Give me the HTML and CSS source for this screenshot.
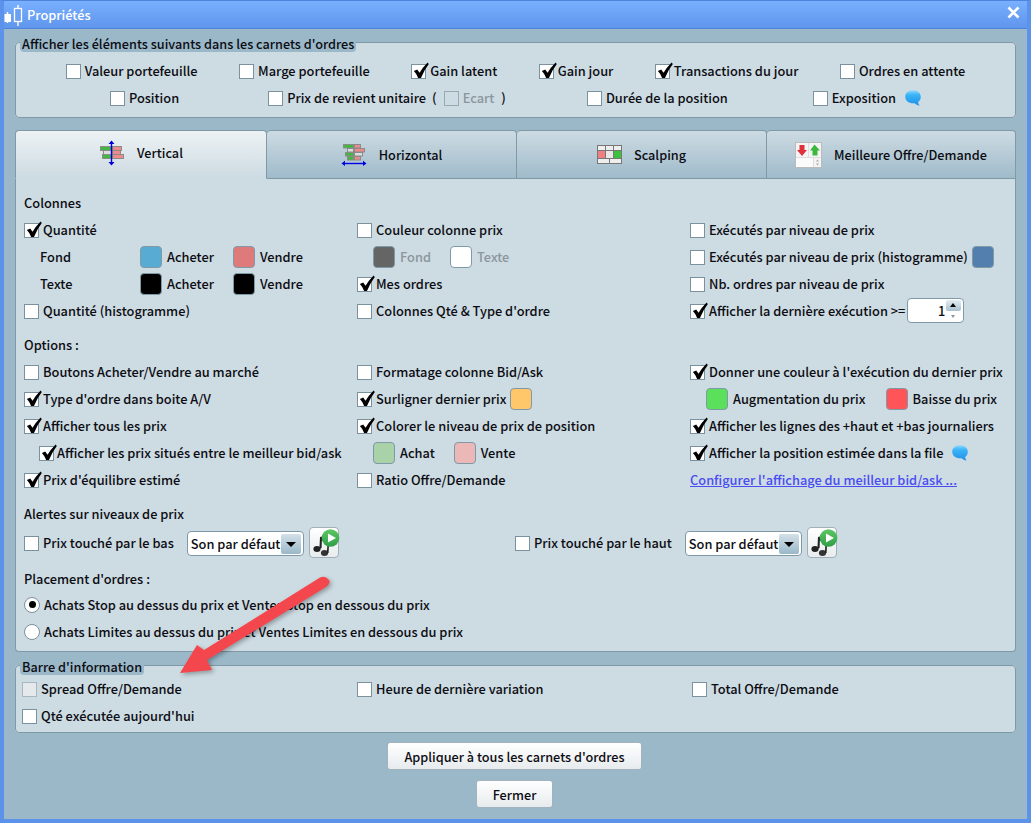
FILE: index.html
```html
<!DOCTYPE html>
<html>
  <head>
    <title>Propriétés</title>
    <link rel="stylesheet" href="styles.css">
  </head>

  <body>
    <svg class="sprites" width="0" height="0">
      <defs>
        <symbol id="check" viewBox="0 0 18 18">
          <path d="M2 9.5 L5.5 8 L8 11.5 Q11 6 16.5 0.5 L17.8 2 Q13 8 9.5 17 L6.5 17 Q5 12.5 2 9.5 Z" fill="#000"/>
        </symbol>
        <symbol id="bubble" viewBox="0 0 16 16">
          <defs>
            <linearGradient id="bubble-fill" x1="0" y1="0" x2="0" y2="1">
              <stop offset="0" stop-color="#8fd8ff"/>
              <stop offset="0.3" stop-color="#3ab4f6"/>
              <stop offset="1" stop-color="#1e90e8"/>
            </linearGradient>
          </defs>
          <path d="M8 0.2 C12.6 0.2 15.8 3 15.8 6.8 C15.8 9.4 14.6 11 13.2 12 C13.2 13.2 13.8 14.6 14.6 15.8 C12.6 15.4 10.6 14.4 9.6 13.3 C4 13.8 0.2 10.8 0.2 6.8 C0.2 3 3.4 0.2 8 0.2 Z" fill="url(#bubble-fill)"/>
        </symbol>
        <symbol id="music" viewBox="0 0 30 31">
          <defs>
            <linearGradient id="play-fill" x1="0" y1="0" x2="0" y2="1">
              <stop offset="0" stop-color="#5cc764"/>
              <stop offset="1" stop-color="#2f9e46"/>
            </linearGradient>
          </defs>
          <ellipse cx="7" cy="21" rx="3.6" ry="3" fill="#222"/>
          <ellipse cx="14.5" cy="25" rx="3.6" ry="3" fill="#333"/>
          <path d="M9.4 21 L10 9 L12 8.4 L11.6 20 Z M16.8 25 L17.4 17 L19 16 L18.6 25 Z M10 9 L18 12 L18 15 L10 12 Z" fill="#222"/>
          <circle cx="20.5" cy="10" r="8.8" fill="url(#play-fill)"/>
          <path d="M18 5.5 L26 10 L18 14.5 Z" fill="#fff"/>
        </symbol>
      </defs>
    </svg>

    <div class="window">
      <div class="titlebar">
        <svg class="app-icon" width="20" height="22" viewBox="0 0 20 22">
          <path d="M3.5 8 V19 M14 1 V22" stroke="#fff" stroke-width="1.4" fill="none"/>
          <rect x="0.5" y="10" width="6.5" height="8" fill="#fff"/>
          <rect x="10.5" y="4.5" width="7" height="13" fill="#6aa1f3" stroke="#fff" stroke-width="1.3"/>
        </svg>
        <span class="title-text">Propriétés</span>
        <svg class="close-icon" width="13" height="13" viewBox="0 0 13 13">
          <path d="M1.5 1.5 L11.5 11.5 M11.5 1.5 L1.5 11.5" stroke="#fff" stroke-width="2.6" fill="none"/>
        </svg>
      </div>

      <div class="content">
        <fieldset class="group">
          <legend>Afficher les éléments suivants dans les carnets d'ordres</legend>
          <div class="top-row top-row-first">
            <label class="chk"><span class="box"></span>Valeur portefeuille</label>
            <label class="chk"><span class="box"></span>Marge portefeuille</label>
            <label class="chk"><span class="box"><svg class="tick"><use href="#check"/></svg></span>Gain latent</label>
            <label class="chk"><span class="box"><svg class="tick"><use href="#check"/></svg></span>Gain jour</label>
            <label class="chk"><span class="box"><svg class="tick"><use href="#check"/></svg></span>Transactions du jour</label>
            <label class="chk"><span class="box"></span>Ordres en attente</label>
          </div>
          <div class="top-row top-row-second">
            <label class="chk"><span class="box"></span>Position</label>
            <div class="chk cost-price">
              <span class="box"></span>Prix de revient unitaire
              <span class="paren paren-open">(</span>
              <span class="box box-disabled"></span><span class="muted ecart">Ecart</span>
              <span class="paren paren-close">)</span>
            </div>
            <label class="chk"><span class="box"></span>Durée de la position</label>
            <label class="chk"><span class="box"></span>Exposition<svg class="bubble bubble-top"><use href="#bubble"/></svg></label>
          </div>
        </fieldset>

        <div class="tabs">
          <div class="tab tab-active">
            <svg class="tab-icon" width="26" height="26" viewBox="0 0 26 26">
              <g stroke="#8b8b8b" stroke-width="1">
                <rect x="1.5" y="6.5" width="11" height="4" fill="#43b83f"/>
                <rect x="13.5" y="6.5" width="9" height="4" fill="#ee8a88"/>
                <rect x="4.5" y="10.5" width="8" height="4" fill="#ddd"/>
                <rect x="13.5" y="10.5" width="8" height="4" fill="#ee8a88"/>
                <rect x="3.5" y="14.5" width="9" height="4" fill="#43b83f"/>
                <rect x="13.5" y="14.5" width="11" height="4" fill="#ee8a88"/>
              </g>
              <path d="M12.5 2 V24" stroke="#0000e0" stroke-width="1.4"/>
              <path d="M12.5 0.5 L15.5 4 H9.5 Z M12.5 25.5 L15.5 22 H9.5 Z" fill="#0000e0"/>
            </svg>
            <span>Vertical</span>
          </div>
          <div class="tab">
            <svg class="tab-icon" width="26" height="22" viewBox="0 0 26 22">
              <g stroke="#8b8b8b" stroke-width="1">
                <rect x="2.5" y="0.5" width="10" height="3.5" fill="#43b83f"/>
                <rect x="13.5" y="0.5" width="6" height="3.5" fill="#ee8a88"/>
                <rect x="6.5" y="4.5" width="6" height="3.5" fill="#ddd"/>
                <rect x="13.5" y="4.5" width="10" height="3.5" fill="#ee8a88"/>
                <rect x="4.5" y="8.5" width="8" height="3.5" fill="#43b83f"/>
                <rect x="13.5" y="8.5" width="8" height="3.5" fill="#ddd"/>
                <rect x="6.5" y="12.5" width="6" height="3.5" fill="#43b83f"/>
                <rect x="13.5" y="12.5" width="6" height="3.5" fill="#ee8a88"/>
              </g>
              <path d="M2 19.5 H24" stroke="#0000e0" stroke-width="1.4"/>
              <path d="M0.5 19.5 L4 16.8 V22 Z M25.5 19.5 L22 16.8 V22 Z" fill="#0000e0"/>
            </svg>
            <span>Horizontal</span>
          </div>
          <div class="tab">
            <svg class="tab-icon" width="25" height="19" viewBox="0 0 25 19">
              <rect x="0" y="0" width="25" height="19" fill="#777"/>
              <rect x="1" y="1" width="7" height="4" fill="#eee"/>
              <rect x="9" y="1" width="7" height="4" fill="#eee"/>
              <rect x="17" y="1" width="7" height="4" fill="#eee"/>
              <rect x="1" y="6" width="7" height="7" fill="#f08080"/>
              <rect x="9" y="6" width="7" height="7" fill="#e8e8e8"/>
              <rect x="17" y="6" width="7" height="7" fill="#3cc23c"/>
              <rect x="1" y="14" width="11" height="4" fill="#eee"/>
              <rect x="13" y="14" width="11" height="4" fill="#eee"/>
            </svg>
            <span>Scalping</span>
          </div>
          <div class="tab tab-last">
            <svg class="tab-icon" width="27" height="26" viewBox="0 0 27 26">
              <rect x="0.5" y="0.5" width="26" height="25" fill="#ddd" stroke="#bbb"/>
              <rect x="1" y="1" width="12" height="14" fill="#f4f4f4"/>
              <rect x="14" y="1" width="12" height="14" fill="#f4f4f4"/>
              <path d="M4.5 3 H9.5 V8 H12 L7 14 L2 8 H4.5 Z" fill="#e0303a"/>
              <path d="M19.5 2.5 L25 8.5 H22.5 V13.5 H17.5 V8.5 H15 Z" fill="#3cb83c"/>
              <rect x="1" y="16" width="17" height="9" fill="#fbfbfb"/>
              <rect x="19" y="16" width="7" height="9" fill="#f4f4f4"/>
              <path d="M22.5 17.5 L24 19.5 H21 Z M22.5 23.5 L24 21.5 H21 Z" fill="#aaa"/>
            </svg>
            <span>Meilleure Offre/Demande</span>
          </div>
        </div>

        <div class="pane">
          <div class="heading">Colonnes</div>
          <div class="cols">
            <label class="chk"><span class="box"><svg class="tick"><use href="#check"/></svg></span>Quantité</label>
            <label class="chk"><span class="box"></span>Couleur colonne prix</label>
            <label class="chk"><span class="box"></span>Exécutés par niveau de prix</label>

            <div class="colors">
              <span class="color-name">Fond</span>
              <span class="swatch swatch-buy"></span>Acheter
              <span class="swatch swatch-sell swatch-next"></span>Vendre
            </div>
            <div class="colors colors-muted">
              <span class="swatch swatch-grey"></span>Fond
              <span class="swatch swatch-white swatch-next"></span>Texte
            </div>
            <label class="chk"><span class="box"></span>Exécutés par niveau de prix (histogramme)<span class="swatch swatch-steel swatch-after"></span></label>

            <div class="colors">
              <span class="color-name">Texte</span>
              <span class="swatch swatch-black"></span>Acheter
              <span class="swatch swatch-black swatch-next"></span>Vendre
            </div>
            <label class="chk"><span class="box"><svg class="tick"><use href="#check"/></svg></span>Mes ordres</label>
            <label class="chk"><span class="box"></span>Nb. ordres par niveau de prix</label>

            <label class="chk"><span class="box"></span>Quantité (histogramme)</label>
            <label class="chk"><span class="box"></span>Colonnes Qté &amp; Type d'ordre</label>
            <div class="chk">
              <span class="box"><svg class="tick"><use href="#check"/></svg></span>Afficher la dernière exécution &gt;=
              <div class="spin">
                <span class="spin-value">1</span>
                <div class="spin-btns">
                  <span class="spin-up"></span>
                  <span class="spin-down"></span>
                </div>
              </div>
            </div>
          </div>

          <div class="heading heading-gap">Options :</div>
          <div class="cols">
            <label class="chk"><span class="box"></span>Boutons Acheter/Vendre au marché</label>
            <label class="chk"><span class="box"></span>Formatage colonne Bid/Ask</label>
            <label class="chk"><span class="box"><svg class="tick"><use href="#check"/></svg></span>Donner une couleur à l'exécution du dernier prix</label>

            <label class="chk"><span class="box"><svg class="tick"><use href="#check"/></svg></span>Type d'ordre dans boite A/V</label>
            <label class="chk"><span class="box"><svg class="tick"><use href="#check"/></svg></span>Surligner dernier prix<span class="swatch swatch-orange swatch-after"></span></label>
            <div class="colors">
              <span class="swatch swatch-up"></span>Augmentation du prix
              <span class="swatch swatch-down swatch-price"></span>Baisse du prix
            </div>

            <label class="chk"><span class="box"><svg class="tick"><use href="#check"/></svg></span>Afficher tous les prix</label>
            <label class="chk"><span class="box"><svg class="tick"><use href="#check"/></svg></span>Colorer le niveau de prix de position</label>
            <label class="chk"><span class="box"><svg class="tick"><use href="#check"/></svg></span>Afficher les lignes des +haut et +bas journaliers</label>

            <label class="chk chk-indent"><span class="box"><svg class="tick"><use href="#check"/></svg></span>Afficher les prix situés entre le meilleur bid/ask</label>
            <div class="colors">
              <span class="swatch swatch-achat"></span>Achat
              <span class="swatch swatch-vente swatch-next"></span>Vente
            </div>
            <label class="chk"><span class="box"><svg class="tick"><use href="#check"/></svg></span>Afficher la position estimée dans la file<svg class="bubble bubble-file"><use href="#bubble"/></svg></label>

            <label class="chk"><span class="box"><svg class="tick"><use href="#check"/></svg></span>Prix d'équilibre estimé</label>
            <label class="chk"><span class="box"></span>Ratio Offre/Demande</label>
            <a class="link">Configurer l'affichage du meilleur bid/ask ...</a>
          </div>

          <div class="heading heading-gap">Alertes sur niveaux de prix</div>
          <div class="alerts">
            <div class="alert">
              <label class="chk"><span class="box"></span>Prix touché par le bas</label>
              <div class="combo">
                <span class="combo-text">Son par défaut</span>
                <span class="combo-btn"></span>
              </div>
              <button class="music-btn"><svg width="30" height="31"><use href="#music"/></svg></button>
            </div>
            <div class="alert">
              <label class="chk"><span class="box"></span>Prix touché par le haut</label>
              <div class="combo">
                <span class="combo-text">Son par défaut</span>
                <span class="combo-btn"></span>
              </div>
              <button class="music-btn"><svg width="30" height="31"><use href="#music"/></svg></button>
            </div>
          </div>

          <div class="heading heading-gap">Placement d'ordres :</div>
          <div class="radios">
            <label class="radio"><span class="dot dot-on"></span>Achats Stop au dessus du prix et Ventes Stop en dessous du prix</label>
            <label class="radio"><span class="dot"></span>Achats Limites au dessus du prix et Ventes Limites en dessous du prix</label>
          </div>
        </div>

        <fieldset class="group group-info">
          <legend>Barre d'information</legend>
          <div class="cols cols-info">
            <label class="chk"><span class="box box-grey"></span>Spread Offre/Demande</label>
            <label class="chk"><span class="box"></span>Heure de dernière variation</label>
            <label class="chk"><span class="box"></span>Total Offre/Demande</label>
            <label class="chk"><span class="box"></span>Qté exécutée aujourd'hui</label>
          </div>
        </fieldset>

        <div class="actions">
          <button class="btn">Appliquer à tous les carnets d'ordres</button>
          <button class="btn">Fermer</button>
        </div>
      </div>

      <!-- red annotation arrow on top of the dialog -->
      <svg class="arrow" width="170" height="110" viewBox="170 570 170 110">
        <path d="M320 577.5 L204 650 L197 645 L180 673 L212 670 L207 660 L326 587 Q331 583 329 580 Q325 575 320 577.5 Z" fill="#f4474d"/>
      </svg>
    </div>
  </body>
</html>
```

FILE: styles.css
```css
* {
  box-sizing: border-box;
}

body {
  margin: 0;
  font-family: "Noto Sans CJK SC", "Noto Sans", sans-serif;
  font-size: 12.8px;
  font-weight: 500;
  color: #0c0c12;
}

.sprites {
  position: absolute;
}

.window {
  position: relative;
  width: 1031px;
  height: 823px;
  background-color: #9bb8c9;
  border: 4px solid #5d92ea;
  border-top: 1px solid #4e84dc;
  overflow: hidden;
}

.titlebar {
  display: flex;
  align-items: center;
  height: 28px;
  margin: 0 -4px;
  padding: 0 8px 0 4px;
  background: linear-gradient(#7ab0ff, #5f95ec);
  border-bottom: 1px solid #4e84dc;
  color: #fff;
}

.app-icon {
  flex: none;
}

.title-text {
  margin-left: 3px;
}

.close-icon {
  margin-left: auto;
  margin-top: -4px;
  margin-right: 3px;
}

.content {
  padding: 3px 11px 0;
}

.group {
  margin: 0;
  padding: 5px 0 6px;
  border: 1px solid #7f99a7;
  border-radius: 4px;
  background-color: #cddbe2;
  min-width: 0;
}

.group legend {
  margin-left: 4px;
  padding: 4px 2px 0;
  font-size: 12.7px;
  line-height: 16px;
  background-color: #9bb8c9;
  border-radius: 0 0 4px 4px;
}

.top-row {
  display: flex;
  justify-content: center;
  height: 27px;
  align-items: center;
}

.top-row-first {
  gap: 41.5px;
}

.top-row-second {
  gap: 85px;
}

.cost-price {
  margin-left: 4px;
  margin-right: -4px;
}

.chk {
  display: flex;
  align-items: center;
  white-space: nowrap;
  height: 27px;
}

.box {
  position: relative;
  flex: none;
  width: 15px;
  height: 15px;
  margin-right: 4px;
  margin-top: 2px;
  background-color: #fff;
  border: 1px solid #7c919e;
}

.box-disabled {
  background-color: #cddbe2;
  border-color: #97a9b4;
}

.box-grey {
  background-color: #e6e9eb;
  border-color: #a9b6bf;
}

.tick {
  position: absolute;
  left: 0;
  top: -3px;
  width: 17px;
  height: 17px;
}

.paren {
  display: inline-block;
}

.paren-open {
  margin: 0 7px 0 6px;
}

.paren-close {
  margin-left: 7px;
}

.muted {
  color: #8b969e;
}

.bubble {
  flex: none;
  width: 16px;
  height: 16px;
}

.bubble-top {
  margin-left: 9px;
}

.bubble-file {
  margin-left: 9px;
}

.tabs {
  display: flex;
  margin-top: 12px;
  height: 49px;
  font-size: 12.7px;
}

.tab {
  flex: none;
  width: 250px;
  display: flex;
  align-items: center;
  justify-content: center;
  gap: 12px;
  background: linear-gradient(#cddbe2, #9fbbcb);
  border: 1px solid #7f99a7;
  border-left-width: 0;
  border-radius: 4px 4px 0 0;
}

.tab-active {
  width: 252px;
  padding-bottom: 4px;
  background: linear-gradient(#edf2f4, #cddbe2);
  border-left-width: 1px;
  border-bottom-color: #cddbe2;
}

.tab-last {
  flex: 1;
  width: auto;
}

.pane {
  margin-top: -1px;
  padding: 11px 0 6px 8px;
  background-color: #cddbe2;
  border: 1px solid #7f99a7;
  border-top-width: 0;
  border-radius: 0 0 4px 4px;
}

.heading {
  height: 27px;
  line-height: 27px;
}

.heading-gap {
  margin-top: 7px;
}

.cols {
  display: grid;
  grid-template-columns: 333px 333px 1fr;
  grid-auto-rows: 27px;
  align-items: center;
}

.cols-info {
  grid-template-columns: 335px 335px 1fr;
  padding-left: 6px;
}

.colors {
  display: flex;
  align-items: center;
  height: 27px;
  padding-left: 16px;
}

.colors-muted {
  color: #8b969e;
}

.color-name {
  width: 100px;
}

.swatch {
  flex: none;
  width: 22px;
  height: 22px;
  margin-right: 5px;
  border: 1px solid #7f99a7;
  border-radius: 4px;
}

.swatch-next {
  margin-left: 19px;
}

.swatch-price {
  margin-left: 20px;
}

.swatch-after {
  margin-left: 4px;
  margin-right: 0;
}

.swatch-buy { background-color: #58abd2; }
.swatch-sell { background-color: #de7a7a; }
.swatch-black { background-color: #000; }
.swatch-grey { background-color: #656565; }
.swatch-white { background-color: #fff; }
.swatch-steel { background-color: #527fae; }
.swatch-orange { background-color: #ffc76a; }
.swatch-up { background-color: #5ae05a; }
.swatch-down { background-color: #ff5558; }
.swatch-achat { background-color: #aad2a8; }
.swatch-vente { background-color: #ebb7b7; }

.chk-indent {
  padding-left: 15px;
}

.chk-indent .box {
  margin-right: 3px;
}

.spin {
  display: flex;
  align-items: center;
  justify-content: flex-end;
  width: 57px;
  height: 25px;
  margin-left: 2px;
  padding-right: 2px;
  background-color: #fff;
  border: 1px solid #7f99a7;
  border-radius: 4px;
}

.spin-value {
  margin-right: 1px;
}

.spin-btns {
  display: flex;
  flex-direction: column;
  width: 15px;
  height: 21px;
}

.spin-up {
  position: relative;
  height: 11px;
  background: linear-gradient(#e4edf1, #a8c2d1);
  border-radius: 2px;
}

.spin-up::after {
  content: "";
  position: absolute;
  left: 4px;
  top: 3px;
  border: 3px solid transparent;
  border-top-width: 0;
  border-bottom: 4px solid #000;
}

.spin-down {
  position: relative;
  height: 10px;
}

.spin-down::after {
  content: "";
  position: absolute;
  left: 5px;
  top: 4px;
  border: 2.5px solid transparent;
  border-bottom-width: 0;
  border-top: 3px solid #8b969e;
}

.link {
  color: #4a4df2;
  text-decoration: underline;
  white-space: nowrap;
}

.alerts {
  display: grid;
  grid-template-columns: 491px 1fr;
  height: 31px;
}

.alert {
  display: flex;
  align-items: center;
}

.combo {
  display: flex;
  align-items: center;
  width: 117px;
  height: 25px;
  margin-left: 13px;
  margin-top: 2px;
  padding: 0 2px 0 3px;
  background-color: #fff;
  border: 1px solid #7f99a7;
  border-radius: 4px;
}

.combo-text {
  flex: 1;
  white-space: nowrap;
}

.combo-btn {
  position: relative;
  flex: none;
  width: 20px;
  height: 20px;
  background: linear-gradient(#d3e0e7, #9bb8c9);
  border-radius: 2px;
}

.combo-btn::after {
  content: "";
  position: absolute;
  left: 5px;
  top: 8px;
  border: 5px solid transparent;
  border-bottom-width: 0;
  border-top: 5px solid #000;
}

.music-btn {
  width: 30px;
  height: 31px;
  margin-left: 5px;
  padding: 0;
  background: linear-gradient(#fff, #e8ecee);
  border: 1px solid #9fb0ba;
  border-radius: 4px;
}

.music-btn svg {
  display: block;
}

.radios {
  margin-top: -1px;
}

.radio {
  display: flex;
  align-items: center;
  height: 27px;
}

.dot {
  position: relative;
  flex: none;
  width: 16px;
  height: 16px;
  margin-right: 4px;
  background-color: #fff;
  border: 1px solid #7c919e;
  border-radius: 50%;
}

.dot-on::after {
  content: "";
  position: absolute;
  left: 3.5px;
  top: 3.5px;
  width: 7px;
  height: 7px;
  background-color: #000;
  border-radius: 50%;
}

.group-info {
  margin-top: 3px;
  padding: 0 0 3px;
}

.actions {
  display: flex;
  flex-direction: column;
  align-items: center;
  gap: 10px;
  margin-top: 9px;
  padding-right: 2px;
}

.btn {
  height: 28px;
  padding: 0 16px;
  font-family: inherit;
  font-size: 12.7px;
  font-weight: 500;
  color: inherit;
  background: linear-gradient(#fff, #e7ebed);
  border: 1px solid #a3b3bd;
  border-radius: 3px;
}

.arrow {
  position: absolute;
  left: 166px;
  top: 569px;
  overflow: visible;
  filter: drop-shadow(2px 2px 2px rgba(0, 0, 0, 0.3));
}
```
